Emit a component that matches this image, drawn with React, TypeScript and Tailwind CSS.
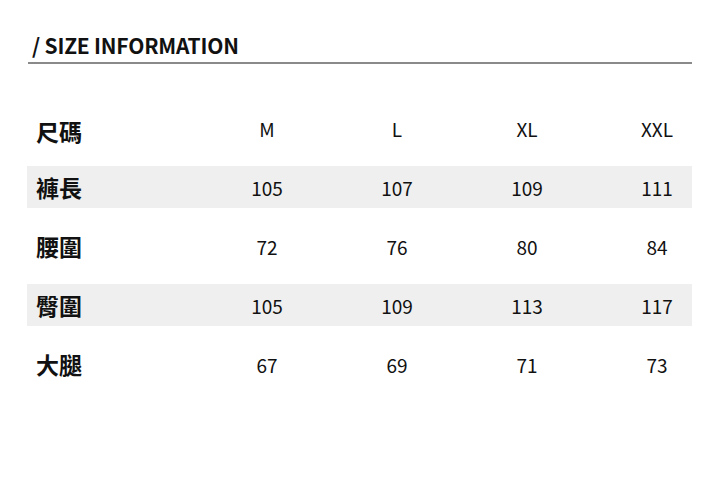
const sizes = ["M", "L", "XL", "XXL"];

const rows: { label: string; values: number[] }[] = [
  { label: "褲長", values: [105, 107, 109, 111] },
  { label: "腰圍", values: [72, 76, 80, 84] },
  { label: "臀圍", values: [105, 109, 113, 117] },
  { label: "大腿", values: [67, 69, 71, 73] },
];

export default function App() {
  return (
    <div
      className="w-[720px] h-[485px] bg-white text-[#111]"
      style={{ fontFamily: '"Noto Sans CJK TC", "Noto Sans", sans-serif' }}
    >
      {/* Title */}
      <div className="pt-[31px] pl-[28px] pr-[28px]">
        <h1 className="pl-[4px] text-[21px] font-bold leading-[28px] tracking-[-0.2px]">/ SIZE INFORMATION</h1>
        <div className="mt-[3px] h-[2px] bg-[#8a8a8a]" />
      </div>

      {/* Table */}
      <div className="mt-[43px] ml-[27px] w-[665px] flex flex-col gap-[17px]">
        <div className="grid grid-cols-[175px_130px_130px_130px_130px] h-[42px] items-center">
          <span className="pl-[9px] text-[23px] font-bold leading-none translate-y-[3px]">尺碼</span>
          {sizes.map((s) => (
            <span key={s} className="text-center text-[19px] leading-none">
              {s}
            </span>
          ))}
        </div>
        {rows.map((r, i) => (
          <div
            key={r.label}
            className={`grid grid-cols-[175px_130px_130px_130px_130px] h-[42px] items-center ${
              i % 2 === 0 ? "bg-[#efefef]" : ""
            }`}
          >
            <span className="pl-[9px] text-[23px] font-bold leading-none">{r.label}</span>
            {r.values.map((v, j) => (
              <span key={j} className="text-center text-[19px] leading-none">
                {v}
              </span>
            ))}
          </div>
        ))}
      </div>
    </div>
  );
}
